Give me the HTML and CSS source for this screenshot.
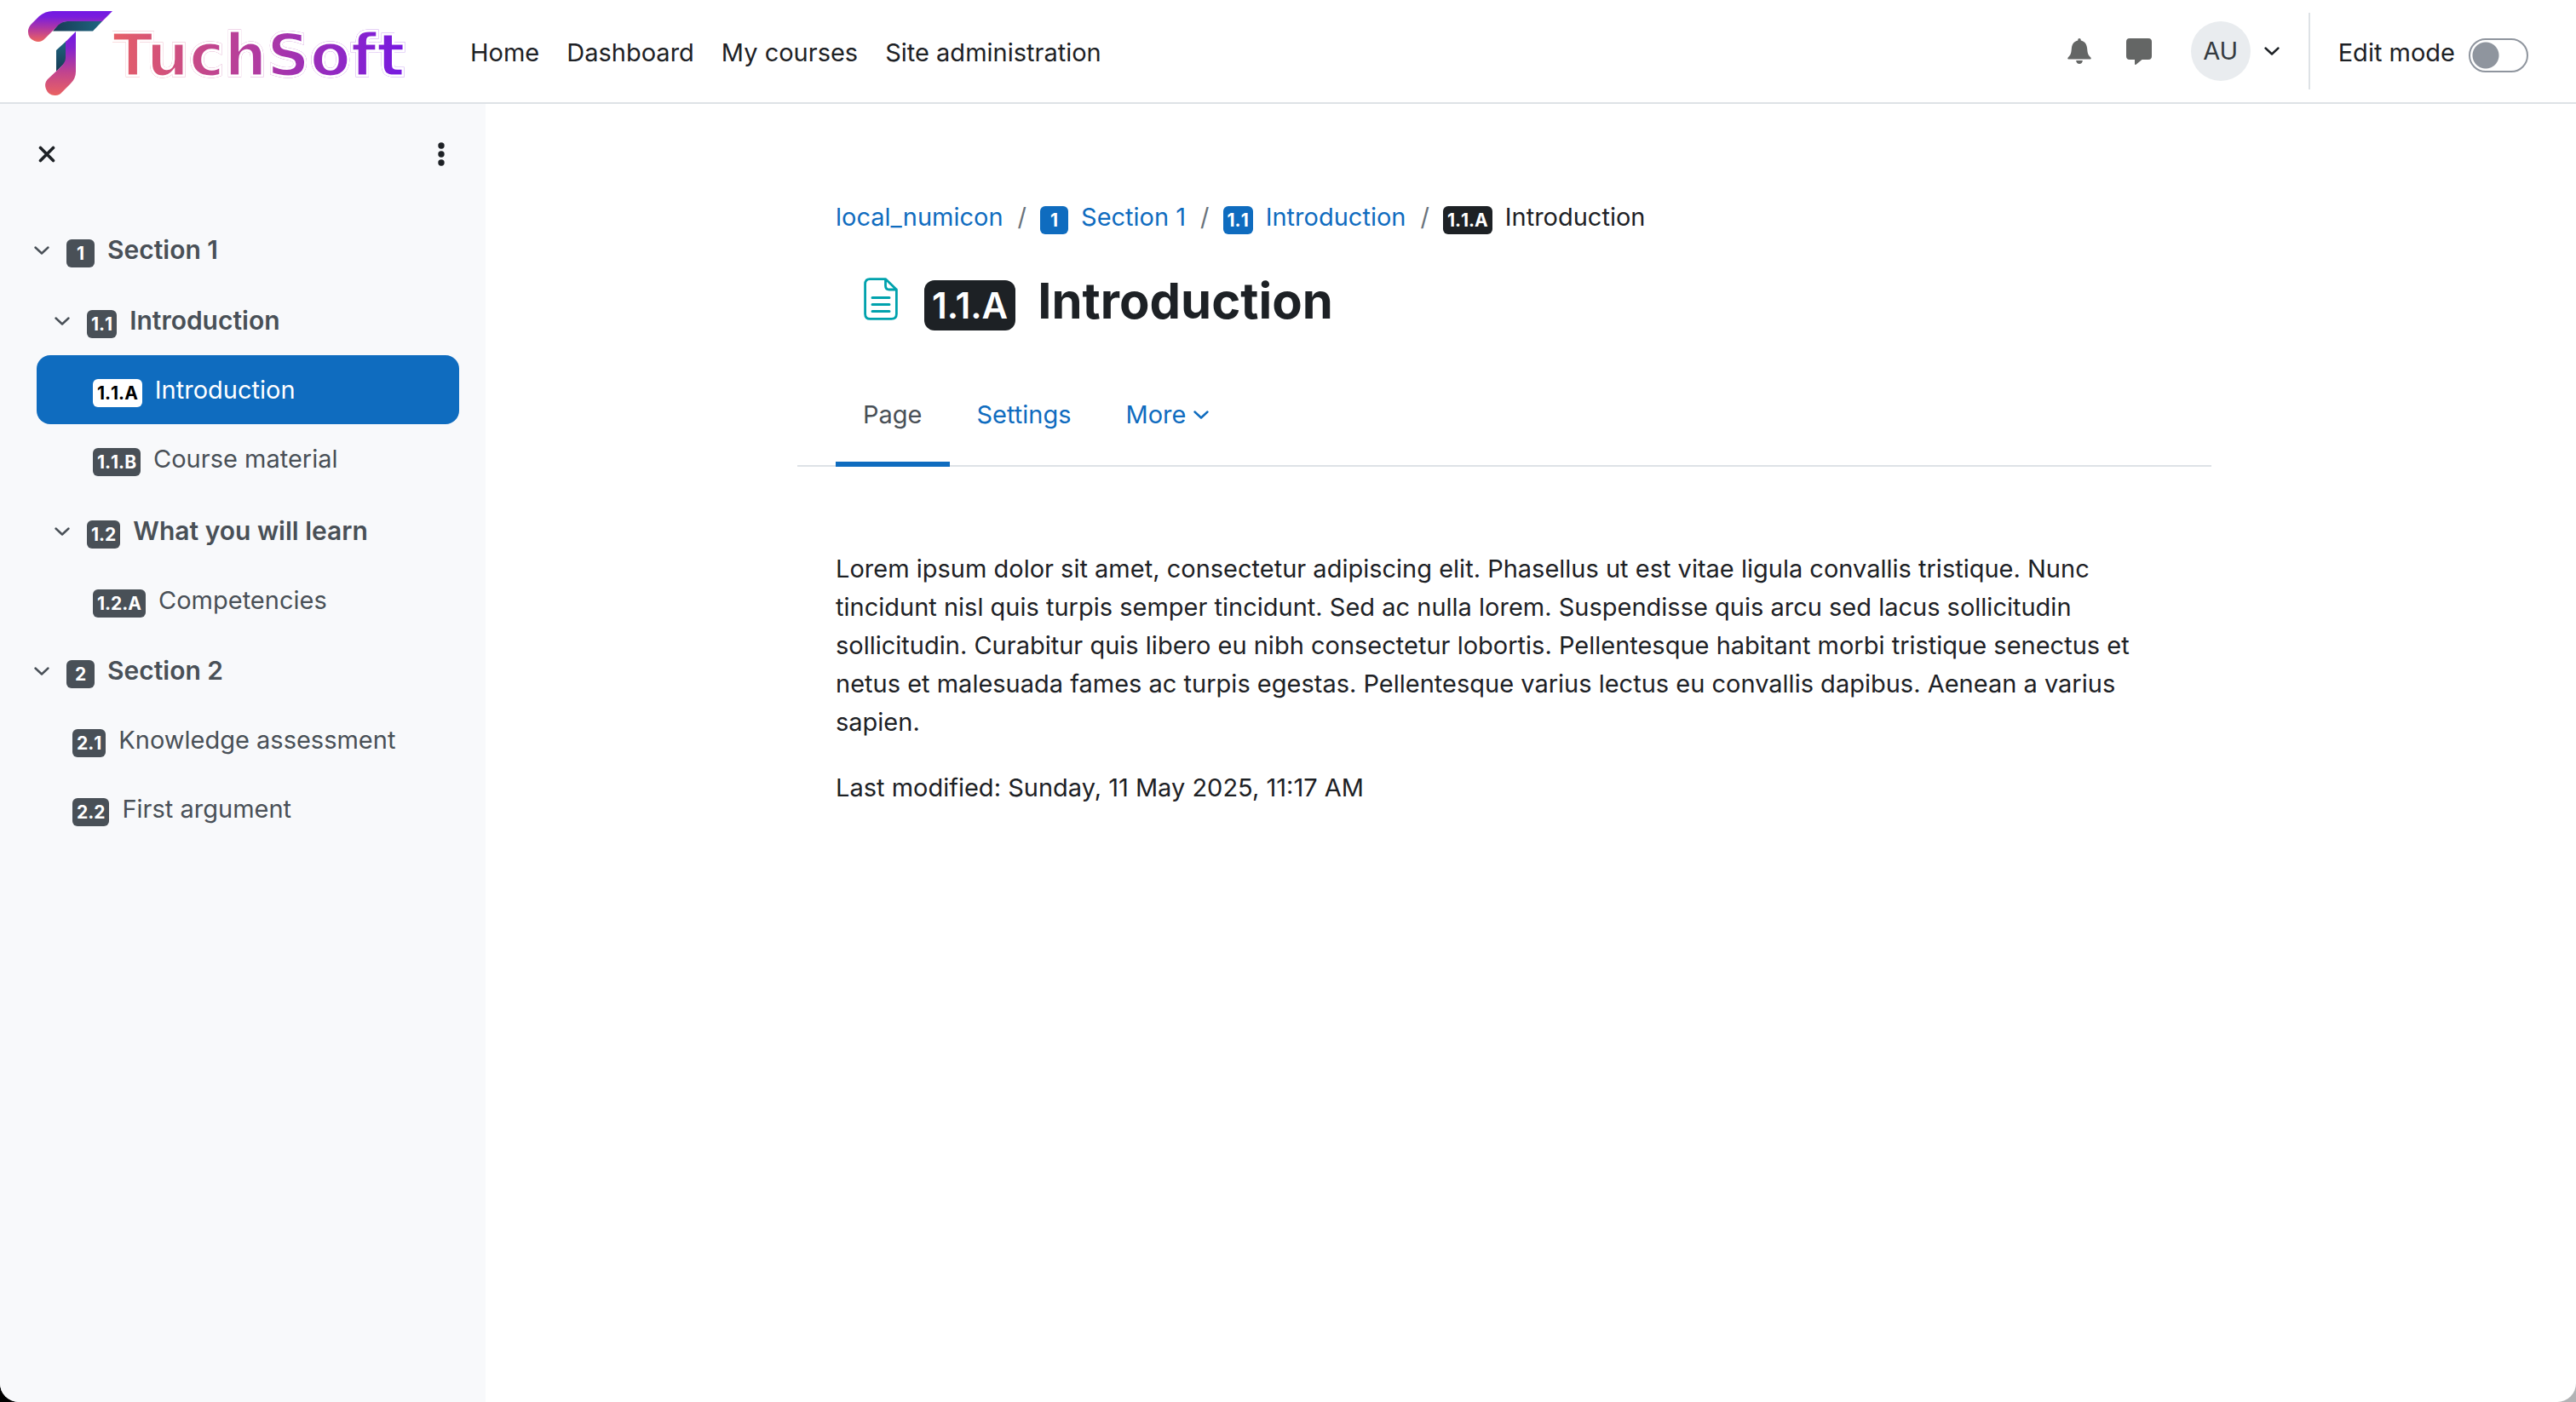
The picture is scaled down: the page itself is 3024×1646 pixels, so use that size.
FILE: index.html
```html
<!DOCTYPE html>
<html lang="en">
<head>
<meta charset="utf-8">
<title>Introduction | TuchSoft</title>
<link rel="stylesheet" href="styles.css">
</head>
<body>
<svg class="defs" aria-hidden="true">
  <symbol id="chevron" viewBox="0 0 18 10"><path d="M1.500 1.500 9 8.500 16.500 1.500" fill="none" stroke="currentColor" stroke-width="2.400" stroke-linecap="round" stroke-linejoin="round"/></symbol>
</svg>
<div class="page">
  <header class="navbar">
    <a class="brand" href="#" aria-label="TuchSoft">
      <svg class="brand-mark" viewBox="33 13 99 99" aria-hidden="true">
        <defs>
          <linearGradient id="arm" x1="0" y1="13" x2="0" y2="48" gradientUnits="userSpaceOnUse"><stop offset="0" stop-color="#7218e4"/><stop offset=".2" stop-color="#7a1edc"/><stop offset=".6" stop-color="#b4399f"/><stop offset="1" stop-color="#ea6262"/></linearGradient>
          <linearGradient id="stem" x1="0" y1="37" x2="0" y2="112" gradientUnits="userSpaceOnUse"><stop offset="0" stop-color="#7218e4"/><stop offset=".25" stop-color="#8422d0"/><stop offset=".65" stop-color="#c3458c"/><stop offset="1" stop-color="#ea6262"/></linearGradient>
          <linearGradient id="tealArm"><stop offset="0" stop-color="#173a54"/><stop offset="1" stop-color="#1f6680"/></linearGradient>
          <linearGradient id="tealStem" x1="0" y1="1" x2="0" y2="0"><stop offset="0" stop-color="#173a54"/><stop offset="1" stop-color="#1f6680"/></linearGradient>
        </defs>
        <path fill="url(#tealArm)" d="M120 25 109 36.500H62L68 29Q72 25 79 25Z"/>
        <path fill="url(#arm)" d="M132 13H62Q53 13 46 19L37 28Q33 32 33 37A11.500 11.500 0 0 0 53 45L66 32Q72 25 79 25H120Z"/>
        <path fill="url(#tealStem)" d="M78 48 66 59V84L78 72Z"/>
        <path fill="url(#stem)" d="M89 37V84Q89 92 83 98L73 108Q70 112 65 112A11.500 11.500 0 0 1 57 92L71 79Q77 73 77 68V49Z"/>
      </svg>
      <span class="brand-name">TuchSoft</span>
    </a>
    <nav class="primary" aria-label="Site">
      <a href="#">Home</a>
      <a href="#">Dashboard</a>
      <a href="#">My courses</a>
      <a href="#">Site administration</a>
    </nav>
    <div class="user-tools">
      <button class="icon-button" type="button" aria-label="Notifications">
        <svg width="28" height="30" viewBox="0 0 28 30" fill="currentColor"><path d="M14 0c1 0 1.700.8 1.700 1.800v.8c4.500 1 6.900 4.300 7.400 8.900.5 5.500.9 8.100 4.200 10.900.8.9.5 2.100-.9 2.100H1.600C.2 24.500-.1 23.300.7 22.400c3.300-2.800 3.700-5.400 4.200-10.900.5-4.600 2.900-7.900 7.400-8.900v-.8C12.300.8 13 0 14 0z"/><path d="M10.200 26h7.600c0 2.400-1.700 4-3.800 4s-3.800-1.600-3.800-4z"/></svg>
      </button>
      <button class="icon-button" type="button" aria-label="Messages">
        <svg width="30" height="31" viewBox="0 0 30 31" fill="currentColor"><path d="M4 0h22a4 4 0 0 1 4 4v17a4 4 0 0 1-4 4h-7.500l-7 5.700c-.7.600-1.500.3-1.500-.7v-5H4a4 4 0 0 1-4-4V4a4 4 0 0 1 4-4z"/></svg>
      </button>
      <button class="user-menu" type="button" aria-label="User menu">
        <span class="avatar">AU</span>
        <svg class="chevron"><use href="#chevron"/></svg>
      </button>
      <div class="edit-mode">
        <label for="edit-mode">Edit mode</label>
        <input class="switch" id="edit-mode" type="checkbox" role="switch">
      </div>
    </div>
  </header>
  <div class="body">
    <aside class="drawer">
      <div class="drawer-head">
        <button class="icon-button" type="button" aria-label="Close course index">
          <svg width="20" height="20" viewBox="0 0 20 20" fill="none" stroke="currentColor" stroke-width="3.600" stroke-linecap="round"><path d="M2.500 2.500l15 15M17.500 2.500l-15 15"/></svg>
        </button>
        <button class="icon-button" type="button" aria-label="Course index options">
          <svg width="8" height="28" viewBox="0 0 8 28" fill="currentColor"><circle cx="4" cy="4" r="3.700"/><circle cx="4" cy="14" r="3.700"/><circle cx="4" cy="24" r="3.700"/></svg>
        </button>
      </div>
      <ul class="index">
        <li>
          <a class="row section" href="#"><svg class="chevron"><use href="#chevron"/></svg><span class="badge">1</span>Section 1</a>
          <ul class="group">
            <li>
              <a class="row section nested" href="#"><svg class="chevron"><use href="#chevron"/></svg><span class="badge">1.1</span>Introduction</a>
              <ul>
                <li><a class="row nested active" href="#" aria-current="page"><span class="badge">1.1.A</span>Introduction</a></li>
                <li><a class="row nested" href="#"><span class="badge">1.1.B</span>Course material</a></li>
              </ul>
            </li>
          </ul>
          <ul class="group">
            <li>
              <a class="row section nested" href="#"><svg class="chevron"><use href="#chevron"/></svg><span class="badge">1.2</span>What you will learn</a>
              <ul>
                <li><a class="row nested" href="#"><span class="badge">1.2.A</span>Competencies</a></li>
              </ul>
            </li>
          </ul>
        </li>
        <li>
          <a class="row section" href="#"><svg class="chevron"><use href="#chevron"/></svg><span class="badge">2</span>Section 2</a>
          <ul>
            <li><a class="row" href="#"><span class="badge">2.1</span>Knowledge assessment</a></li>
            <li><a class="row" href="#"><span class="badge">2.2</span>First argument</a></li>
          </ul>
        </li>
      </ul>
    </aside>
    <main class="main">
      <div class="content">
        <nav aria-label="Breadcrumb">
          <ol class="breadcrumb">
            <li><a href="#">local_numicon</a></li>
            <li><a href="#"><span class="badge">1</span>Section 1</a></li>
            <li><a href="#"><span class="badge">1.1</span>Introduction</a></li>
            <li class="current" aria-current="page"><span class="badge">1.1.A</span>Introduction</li>
          </ol>
        </nav>
        <div class="title">
          <svg class="title-icon" width="40" height="50" viewBox="0 0 40 50" fill="none" stroke="#00a2ad" stroke-linejoin="round" stroke-linecap="round" aria-hidden="true"><path stroke-width="2.800" d="M7 1.600H25.500L38.400 14V42.500Q38.400 48.400 32.500 48.400H7.500Q1.600 48.400 1.600 42.500V7.500Q1.600 1.600 7 1.600ZM25.500 1.600V9.500Q25.500 14 30 14H38.400"/><path stroke-width="3" d="M10 23.500H30M10 31.500H30M10 39.500H30"/></svg>
          <h1><span class="badge badge-large">1.1.A</span>Introduction</h1>
        </div>
        <nav class="tabs" aria-label="Activity">
          <a class="tab selected" href="#" aria-current="page">Page</a>
          <a class="tab" href="#">Settings</a>
          <a class="tab" href="#">More<svg class="chevron"><use href="#chevron"/></svg></a>
        </nav>
        <div class="text">
          <p>Lorem ipsum dolor sit amet, consectetur adipiscing elit. Phasellus ut est vitae ligula convallis tristique. Nunc tincidunt nisl quis turpis semper tincidunt. Sed ac nulla lorem. Suspendisse quis arcu sed lacus sollicitudin sollicitudin. Curabitur quis libero eu nibh consectetur lobortis. Pellentesque habitant morbi tristique senectus et netus et malesuada fames ac turpis egestas. Pellentesque varius lectus eu convallis dapibus. Aenean a varius sapien.</p>
          <p>Last modified: Sunday, 11 May 2025, 11:17 AM</p>
        </div>
      </div>
    </main>
  </div>
</div>
</body>
</html>
```
FILE: styles.css
```css
* { box-sizing: border-box; }

body {
  margin: 0;
  background: linear-gradient(to right, #000 50%, #b2b3b5 50%);
  color: #1d2125;
  font: 29px/45px Inter, "Liberation Sans", sans-serif;
}

a { color: #0f6cbf; text-decoration: none; }
ul, ol { list-style: none; margin: 0; padding: 0; }
button { padding: 0; border: 0; background: none; color: inherit; font: inherit; cursor: pointer; }
svg { display: block; flex: none; }
.defs { display: none; }

.page {
  display: flex;
  flex-direction: column;
  min-height: 100vh;
  overflow: hidden;
  background: #fff;
  border-radius: 0 0 22px 22px;
}

/* Top bar */
.navbar {
  display: flex;
  align-items: center;
  height: 122px;
  padding: 0 56px 0 33px;
  border-bottom: 2px solid #dee2e6;
}
.brand { display: flex; align-items: center; width: 503px; padding-top: 4px; }
.brand-mark { width: 99px; height: 99px; }
/* The white outline trims the bold letters down to a medium weight */
.brand-name {
  margin-top: 6px;
  font: bold 70px/90px "DejaVu Sans", sans-serif;
  color: transparent;
  background: linear-gradient(to right, #e65f66, #b03aa2 50%, #7619e2);
  background-clip: text;
  -webkit-background-clip: text;
  -webkit-text-stroke: 3px #fff;
}
.primary { display: flex; gap: 32px; padding: 2px 16px 0; }
.primary a { color: #1d2125; }
.user-tools { display: flex; align-items: center; margin-left: auto; }
.icon-button { color: #1d2125; }
.user-tools .icon-button { margin-right: 41px; color: #646665; }
.user-menu { display: flex; align-items: center; gap: 16px; margin: 0 34px 0 5px; }
.avatar {
  width: 70px;
  border-radius: 50%;
  background: #e9ecef;
  color: #343a40;
  line-height: 70px;
  text-align: center;
}
.chevron { width: 18px; height: 10px; }
.edit-mode {
  display: flex;
  align-items: center;
  gap: 16px;
  height: 90px;
  padding-left: 33px;
  border-left: 2px solid #dee2e6;
}
.edit-mode label { padding-top: 2px; }
.switch {
  appearance: none;
  width: 70px;
  height: 40px;
  margin: 10px 0 0;
  border: 2px solid #8f959e;
  border-radius: 20px;
  background: radial-gradient(circle at 18px 18px, #8f959e 15px, #fff 16px);
}

.body { display: flex; flex: 1; }

/* Course index */
.drawer { width: 570px; flex: none; padding: 0 31px 0 38px; background: #f8f9fb; color: #495057; }
.drawer-head {
  display: flex;
  align-items: center;
  justify-content: space-between;
  height: 118px;
  margin-bottom: 13px;
  padding: 0 17px 0 7px;
}
.group { padding: 2px 0; }
.row {
  display: flex;
  align-items: center;
  gap: 15px;
  margin-left: 5px;
  padding: 18px 0 18px 42px;
  border-radius: 16px;
  color: #495057;
}
.row.nested { padding-left: 66px; }
.row.section { padding-left: 0; margin-left: 2px; font-size: 30px; font-weight: 600; }
.row.section.nested { padding-left: 24px; }
.row .chevron { margin-right: 5px; }
.row.active { background: #0f6cbf; color: #fff; }

.badge {
  display: inline-block;
  min-width: 33px;
  margin-top: 8px;
  padding: 0 5px;
  border-radius: 6px;
  background: #495057;
  color: #fff;
  font-size: 21px;
  font-weight: 700;
  font-kerning: none;
  line-height: 33px;
  text-align: center;
}
.active .badge { background: #fff; color: #000; }

/* Activity page */
.main { flex: 1; padding: 110px 62px 0 0; }
.content { max-width: 1660px; margin: 0 auto; }
.breadcrumb { display: flex; padding: 0 45px; }
.breadcrumb li, .breadcrumb li a { display: flex; align-items: center; }
.breadcrumb li a, .breadcrumb .current { gap: 15px; }
.breadcrumb li + li::before { content: "/"; padding: 0 16px 0 17px; color: #6a737b; }
.breadcrumb .current::before { margin-right: -15px; }
.breadcrumb .badge { background: #0f6cbf; }
.breadcrumb .current .badge { background: #1d2125; }
.title { display: flex; align-items: center; gap: 31px; margin-top: 41px; padding: 0 78px; }
.title-icon { margin-bottom: 4px; }
h1 { display: flex; align-items: center; gap: 26px; margin: 0; font-size: 58px; font-weight: 700; line-height: 70px; }
.badge-large {
  margin-top: 10px;
  padding: 0 9px;
  border-radius: 12px;
  background: #1d2125;
  font-size: 42px;
  font-weight: 600;
  font-kerning: normal;
  line-height: 59px;
}
.tabs { display: flex; margin-top: 46px; padding: 0 45px; border-bottom: 2px solid #dee2e6; }
.tab {
  display: flex;
  align-items: center;
  gap: 9px;
  margin-bottom: -2px;
  padding: 30px 32px 33px;
  border-bottom: 6px solid transparent;
}
.tab.selected { border-color: #0f6cbf; color: #495057; }
.text { padding: 97px 45px; }
.text p { margin: 0 0 32px; }
```
